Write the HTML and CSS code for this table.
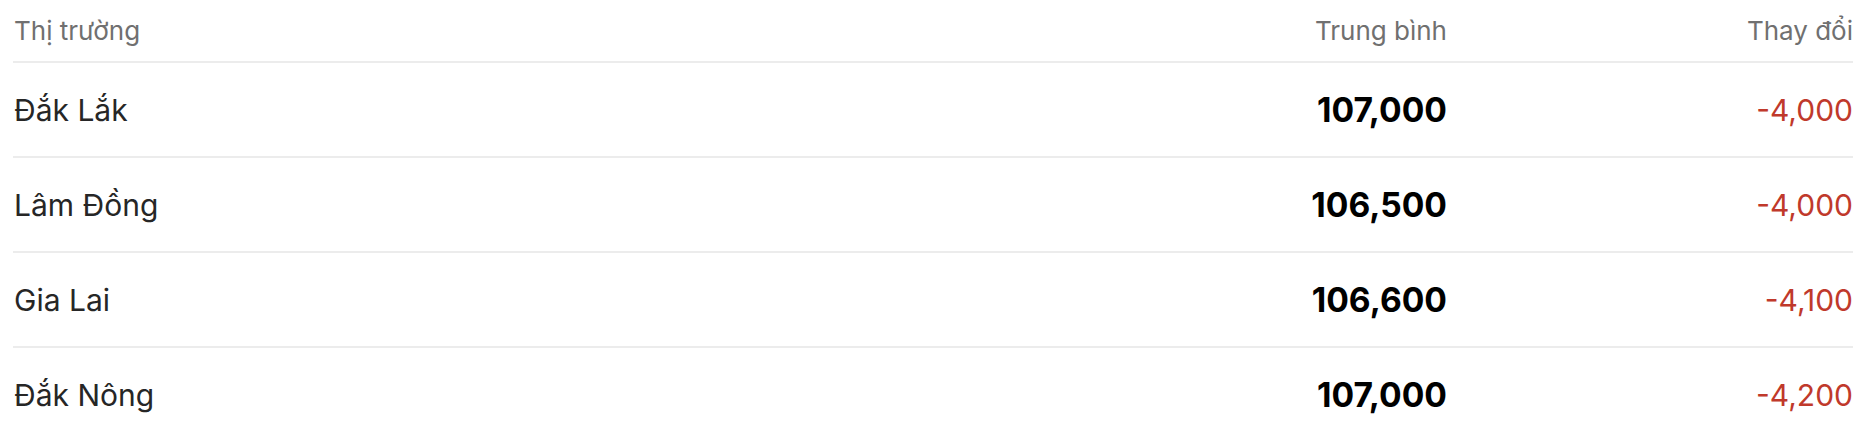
FILE: index.html
```html
<!DOCTYPE html>
<html lang="vi">
<head>
<meta charset="utf-8">
<title>Giá cà phê</title>
<link rel="stylesheet" href="styles.css">
</head>
<body>
<div class="table">
  <div class="row head">
    <div class="cell market">Thị trường</div>
    <div class="cell num">Trung bình</div>
    <div class="cell num">Thay đổi</div>
  </div>
  <div class="row">
    <div class="cell market">Đắk Lắk</div>
    <div class="cell num price">107,000</div>
    <div class="cell num down">-4,000</div>
  </div>
  <div class="row">
    <div class="cell market">Lâm Đồng</div>
    <div class="cell num price">106,500</div>
    <div class="cell num down">-4,000</div>
  </div>
  <div class="row">
    <div class="cell market">Gia Lai</div>
    <div class="cell num price">106,600</div>
    <div class="cell num down">-4,100</div>
  </div>
  <div class="row">
    <div class="cell market">Đắk Nông</div>
    <div class="cell num price">107,000</div>
    <div class="cell num down">-4,200</div>
  </div>
</div>
</body>
</html>
```

FILE: styles.css
```css
html, body {
  margin: 0;
  padding: 0;
  background: #ffffff;
}
body {
  font-family: Inter, "Noto Sans", sans-serif;
}
.table {
  margin: 0 15px 0 13px;
}
.row {
  display: grid;
  grid-template-columns: 1fr 406px 406px;
  align-items: center;
  height: 93px;
  border-bottom: 2px solid #ececec;
  font-size: 30px;
  color: #262626;
}
.row.head {
  height: 61px;
  font-size: 26px;
  color: #707070;
}
.cell {
  white-space: nowrap;
}
.market {
  padding-left: 1px;
}
.num {
  text-align: right;
}
.price {
  font-size: 33.6px;
  font-weight: 700;
  color: #000000;
}
.down {
  color: #c0392b;
}
```
